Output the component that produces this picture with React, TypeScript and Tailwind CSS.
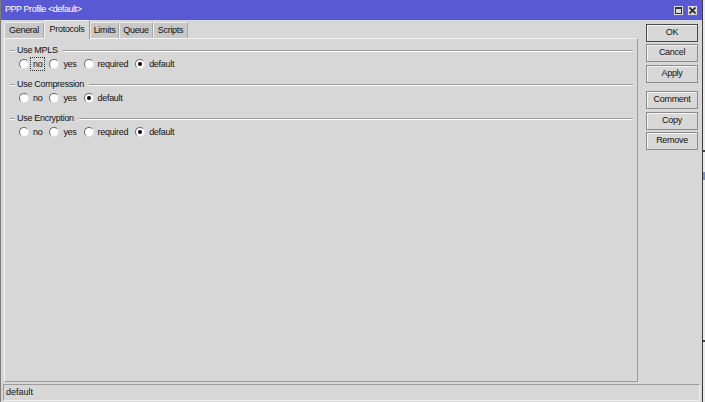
import React from 'react';

type Opt = { label: string; checked?: boolean; focus?: boolean };

const groups: { title: string; options: Opt[] }[] = [
  {
    title: 'Use MPLS',
    options: [{ label: 'no', focus: true }, { label: 'yes' }, { label: 'required' }, { label: 'default', checked: true }],
  },
  {
    title: 'Use Compression',
    options: [{ label: 'no' }, { label: 'yes' }, { label: 'default', checked: true }],
  },
  {
    title: 'Use Encryption',
    options: [{ label: 'no' }, { label: 'yes' }, { label: 'required' }, { label: 'default', checked: true }],
  },
];

const tabs = [
  { label: 'General', w: 'w-[40px]' },
  { label: 'Protocols', w: 'w-[46px]', active: true },
  { label: 'Limits', w: 'w-[29px]' },
  { label: 'Queue', w: 'w-[34px]' },
  { label: 'Scripts', w: 'w-[35px]' },
];

const buttons = [
  { label: 'OK', mt: 'mt-0', primary: true },
  { label: 'Cancel', mt: 'mt-[2px]' },
  { label: 'Apply', mt: 'mt-[3px]' },
  { label: 'Comment', mt: 'mt-[8px]' },
  { label: 'Copy', mt: 'mt-[3px]' },
  { label: 'Remove', mt: 'mt-[2px]' },
];

function Radio({ opt }: { opt: Opt }) {
  return (
    <div className="flex items-center gap-[1px]">
      <span className="relative w-[10px] h-[10px] rounded-full bg-white border border-t-[#6a6a6a] border-l-[#6a6a6a] border-r-[#e4e4e4] border-b-[#e4e4e4] flex items-center justify-center">
        {opt.checked && <span className="w-[4px] h-[4px] rounded-full bg-black" />}
      </span>
      <span
        className={`px-[2px] leading-[12px] border ${
          opt.focus ? 'border-dotted border-[#333]' : 'border-transparent'
        }`}
      >
        {opt.label}
      </span>
    </div>
  );
}

export default function App() {
  return (
    <div className="w-[705px] h-[402px] flex overflow-hidden bg-[#d7d7d7] text-[9px] text-[#111] tracking-[-0.3px] font-['Liberation_Sans',Arial,sans-serif]">
      <div className="w-[702px] flex flex-col border-l border-[#7c7c7c]">
        {/* Title bar */}
        <div className="h-[20px] shrink-0 bg-[#5959d3] text-white flex items-center justify-between pl-[4px] pr-[4px]">
          <span className="tracking-[-0.45px]">PPP Profile &lt;default&gt;</span>
          <div className="flex gap-[3px]">
            <span className="w-[11px] h-[11px] bg-[#d8d8d8] border border-[#6e6e6e] flex items-center justify-center">
              <span className="w-[7px] h-[7px] border border-[#333] border-t-2" />
            </span>
            <span className="w-[11px] h-[11px] bg-[#d8d8d8] border border-[#6e6e6e] flex items-center justify-center">
              <svg width="7" height="7" viewBox="0 0 7 7">
                <path d="M0.5 0.5L6.5 6.5M6.5 0.5L0.5 6.5" stroke="#222" strokeWidth="1.6" />
              </svg>
            </span>
          </div>
        </div>

        <div className="flex flex-1 min-h-0">
          {/* Left: tabs + panel */}
          <div className="flex flex-col w-[637px] pl-[3px]">
            <div className="h-[18px] flex items-end">
              {tabs.map((t) =>
                t.active ? (
                  <div
                    key={t.label}
                    className={`${t.w} h-[19px] -mb-[1px] relative z-10 bg-[#d7d7d7] border border-b-0 border-t-[#f2f2f2] border-l-[#f2f2f2] border-r-[#9a9a9a] flex items-start justify-center pt-[2px]`}
                  >
                    {t.label}
                  </div>
                ) : (
                  <div
                    key={t.label}
                    className={`${t.w} h-[16px] bg-[#c8c8c8] border border-b-0 border-t-[#ececec] border-l-[#ececec] border-r-[#a8a8a8] flex items-center justify-center`}
                  >
                    {t.label}
                  </div>
                )
              )}
            </div>
            <div className="h-[344px] border border-t-[#f2f2f2] border-l-[#f2f2f2] border-r-[#9c9c9c] border-b-[#9c9c9c] pt-[6px] pl-[5px] pr-[4px] flex flex-col gap-[8px]">
              {groups.map((g) => (
                <div key={g.title} className="flex flex-col">
                  <div className="h-[11px] flex items-center gap-[2px]">
                    <span className="w-[5px] h-[2px] border-t border-[#9a9a9a] border-b border-b-white" />
                    <span className="pr-[3px]">{g.title}</span>
                    <span className="flex-1 h-[2px] border-t border-[#9a9a9a] border-b border-b-white" />
                  </div>
                  <div className="h-[14px] mt-[1px] pl-[9px] flex items-center gap-[4px]">
                    {g.options.map((o) => (
                      <Radio key={o.label} opt={o} />
                    ))}
                  </div>
                </div>
              ))}
            </div>
          </div>

          {/* Right: buttons */}
          <div className="flex-1 flex flex-col pt-[4px] pl-[8px]">
            {buttons.map((b) => (
              <div
                key={b.label}
                className={`${b.mt} h-[18px] w-[52px] flex items-center justify-center bg-[#d8d8d8] border ${
                  b.primary ? 'border-[#4a4a4a]' : 'border-[#8c8c8c]'
                } shadow-[inset_1px_1px_0_#f4f4f4]`}
              >
                {b.label}
              </div>
            ))}
          </div>
        </div>

        {/* Status bar */}
        <div className="h-[17px] shrink-0 mt-[2px] mb-[1px] ml-[2px] mr-[2px] border border-t-[#9c9c9c] border-l-[#9c9c9c] border-r-[#f0f0f0] border-b-[#f0f0f0] flex items-center pl-[2px] tracking-normal">
          default
        </div>
      </div>

      {/* Edge of the window behind */}
      <div className="flex-1 flex flex-col border-l border-[#3c3c3c] bg-[#ececec]">
        <div className="h-[150px]" />
        <div className="h-[2px] bg-[#444]" />
        <div className="h-[20px]" />
        <div className="h-[8px] bg-[#6b8ed6]" />
        <div className="h-[160px]" />
        <div className="h-[2px] bg-[#444]" />
      </div>
    </div>
  );
}
